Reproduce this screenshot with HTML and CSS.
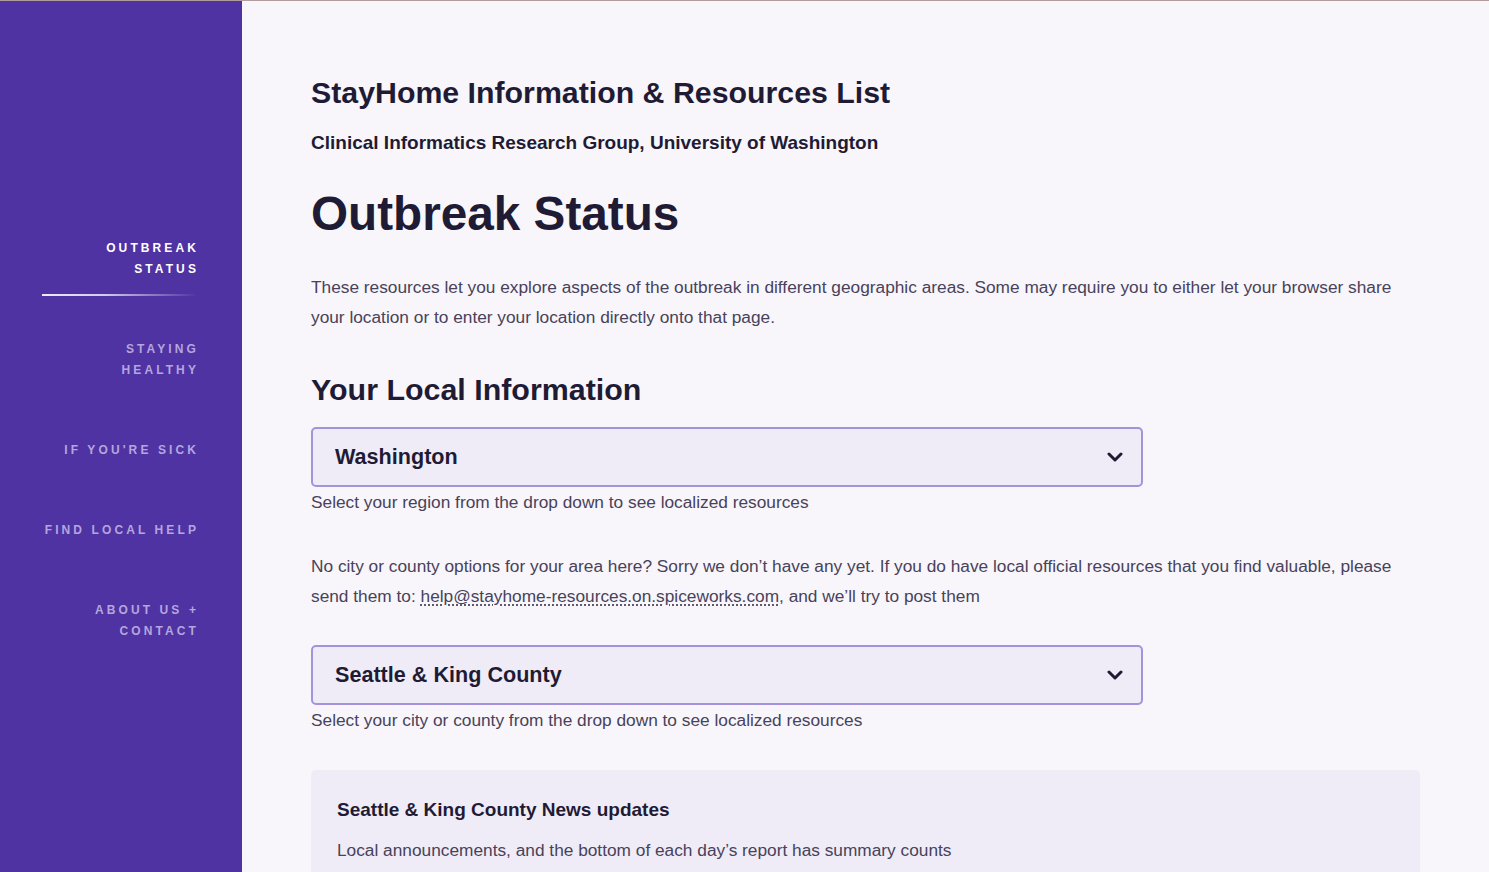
FILE: index.html
```html
<!DOCTYPE html>
<html lang="en">
<head>
<meta charset="utf-8">
<title>StayHome Information &amp; Resources List</title>
<link rel="stylesheet" href="styles.css">
</head>
<body>
<div class="page">
  <aside class="sidebar">
    <nav class="nav">
      <a class="nav-item active" href="#">Outbreak<br>Status</a>
      <a class="nav-item" href="#">Staying<br>Healthy</a>
      <a class="nav-item" href="#">If you're sick</a>
      <a class="nav-item" href="#">Find local help</a>
      <a class="nav-item" href="#">About us +<br>contact</a>
    </nav>
  </aside>
  <main class="main">
    <h1 class="site-title">StayHome Information &amp; Resources List</h1>
    <p class="site-sub">Clinical Informatics Research Group, University of Washington</p>
    <h2 class="page-title">Outbreak Status</h2>
    <p class="body-text intro">These resources let you explore aspects of the outbreak in different geographic areas. Some may require you to either let your browser share your location or to enter your location directly onto that page.</p>
    <h3 class="section-title">Your Local Information</h3>
    <div class="select">
      <span class="select-value">Washington</span>
      <svg class="chevron" width="16" height="10" viewBox="0 0 16 10"><polyline points="2,2 8,8 14,2" fill="none" stroke="#1f1b35" stroke-width="3" stroke-linecap="round" stroke-linejoin="round"/></svg>
    </div>
    <p class="helper">Select your region from the drop down to see localized resources</p>
    <p class="body-text note">No city or county options for your area here? Sorry we don’t have any yet. If you do have local official resources that you find valuable, please send them to: <a class="mail" href="#">help@stayhome-resources.on.spiceworks.com</a>, and we’ll try to post them</p>
    <div class="select">
      <span class="select-value">Seattle &amp; King County</span>
      <svg class="chevron" width="16" height="10" viewBox="0 0 16 10"><polyline points="2,2 8,8 14,2" fill="none" stroke="#1f1b35" stroke-width="3" stroke-linecap="round" stroke-linejoin="round"/></svg>
    </div>
    <p class="helper">Select your city or county from the drop down to see localized resources</p>
    <section class="card">
      <h4 class="card-title">Seattle &amp; King County News updates</h4>
      <p class="card-text">Local announcements, and the bottom of each day’s report has summary counts</p>
    </section>
  </main>
</div>
</body>
</html>
```

FILE: styles.css
```css
* { box-sizing: border-box; }
html, body { margin: 0; padding: 0; }
body {
  font-family: "Liberation Sans", Arial, Helvetica, sans-serif;
  background: #f8f6fa;
  color: #1f1b35;
  border-top: 1px solid #b09c9c;
  height: 872px;
  overflow: hidden;
}
.page {
  display: flex;
  min-height: 871px;
}
.sidebar {
  width: 242px;
  flex: 0 0 242px;
  background: #5033a3;
}
.nav {
  display: flex;
  flex-direction: column;
  align-items: flex-end;
  gap: 59px;
  padding: 237px 43px 0 0;
}
.nav-item {
  position: relative;
  display: block;
  text-align: right;
  text-decoration: none;
  text-transform: uppercase;
  font-size: 12px;
  font-weight: bold;
  letter-spacing: 3.1px;
  line-height: 21px;
  color: #b4a6de;
}
.nav-item.active { color: #ffffff; }
.nav-item.active::after {
  content: "";
  position: absolute;
  top: 56px;
  right: 2px;
  width: 155px;
  height: 2px;
  background: linear-gradient(to right, rgba(255,255,255,0.9) 0%, rgba(255,255,255,0.75) 40%, rgba(255,255,255,0) 100%);
}
.main {
  flex: 1;
  padding: 74px 69px 0 69px;
}
.site-title {
  margin: 0;
  font-size: 30.3px;
  line-height: 36px;
  font-weight: bold;
}
.site-sub {
  margin: 21px 0 0;
  font-size: 19px;
  line-height: 22px;
  font-weight: bold;
}
.page-title {
  margin: 30px 0 0;
  font-size: 47.7px;
  line-height: 60px;
  font-weight: bold;
}
.body-text {
  margin: 0;
  font-size: 17.3px;
  line-height: 30px;
  color: #48425a;
}
.intro { margin-top: 28px; }
.section-title {
  margin: 39px 0 0;
  font-size: 30.4px;
  line-height: 36px;
  font-weight: bold;
}
.select {
  margin-top: 20px;
  width: 832px;
  height: 60px;
  display: flex;
  align-items: center;
  justify-content: space-between;
  padding: 0 18px 0 22px;
  background: #efecf7;
  border: 2px solid #a592dc;
  border-radius: 5px;
}
.select-value {
  font-size: 21.6px;
  font-weight: bold;
  color: #1f1b35;
}
.helper {
  margin: 3px 0 0;
  font-size: 17.3px;
  line-height: 24px;
  color: #48425a;
}
.note { margin-top: 37px; }
.mail {
  color: inherit;
  text-decoration: underline dotted #48425a;
  text-underline-offset: 3px;
}
.note + .select { margin-top: 34px; }
.card {
  margin-top: 38px;
  background: #efecf7;
  border-radius: 5px;
  padding: 29px 26px 30px;
}
.card-title {
  margin: 0;
  font-size: 19px;
  line-height: 22px;
  font-weight: bold;
}
.card-text {
  margin: 17px 0 0;
  font-size: 17.3px;
  line-height: 24px;
  color: #48425a;
}
```
